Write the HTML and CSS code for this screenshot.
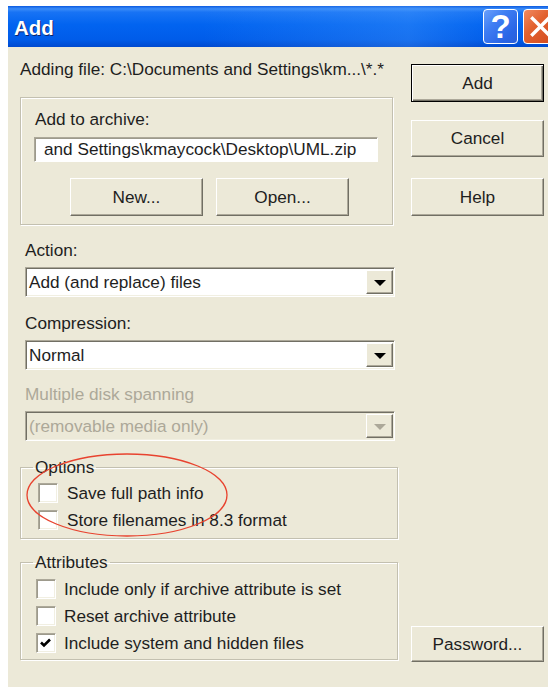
FILE: index.html
```html
<!DOCTYPE html>
<html lang="en">
<head>
<meta charset="utf-8">
<title>Add</title>
<link rel="stylesheet" href="styles.css">
</head>
<body>
<div class="window">
  <div class="titlebar">
    <span class="title">Add</span>
    <div class="caption-buttons">
      <span class="cap-btn cap-help">?</span>
      <span class="cap-btn cap-close">
        <svg width="35" height="35" viewBox="0 0 35 35"><path d="M9 9 L26 26 M26 9 L9 26" stroke="#fff" stroke-width="3.6" stroke-linecap="square" fill="none"/></svg>
      </span>
    </div>
  </div>

  <div class="client">
    <div class="col-main">
      <div class="line adding">Adding file: C:\Documents and Settings\km...\*.*</div>

      <div class="group archive">
        <div class="line">Add to archive:</div>
        <div class="textbox">and Settings\kmaycock\Desktop\UML.zip</div>
        <div class="btn-row">
          <button class="btn">New...</button>
          <button class="btn">Open...</button>
        </div>
      </div>

      <div class="line field-label first">Action:</div>
      <div class="combo">
        <span class="combo-text">Add (and replace) files</span>
        <span class="combo-btn"><span class="arrow"></span></span>
      </div>

      <div class="line field-label">Compression:</div>
      <div class="combo">
        <span class="combo-text">Normal</span>
        <span class="combo-btn"><span class="arrow"></span></span>
      </div>

      <div class="line field-label disabled spanning">Multiple disk spanning</div>
      <div class="combo is-disabled">
        <span class="combo-text">(removable media only)</span>
        <span class="combo-btn"><span class="arrow"></span></span>
      </div>

      <fieldset class="groupbox options">
        <legend>Options</legend>
        <label class="check-row"><span class="check"></span><span>Save full path info</span></label>
        <label class="check-row"><span class="check"></span><span>Store filenames in 8.3 format</span></label>
      </fieldset>

      <fieldset class="groupbox attributes">
        <legend>Attributes</legend>
        <label class="check-row"><span class="check"></span><span>Include only if archive attribute is set</span></label>
        <label class="check-row"><span class="check"></span><span>Reset archive attribute</span></label>
        <label class="check-row"><span class="check checked"><svg width="18" height="18" viewBox="0 0 18 18"><path d="M4 8.5 L7 11.5 L13 5.5" stroke="#000" stroke-width="2.6" fill="none"/></svg></span><span>Include system and hidden files</span></label>
      </fieldset>
    </div>

    <div class="col-buttons">
      <button class="btn default">Add</button>
      <button class="btn cancel">Cancel</button>
      <button class="btn help">Help</button>
      <button class="btn password">Password...</button>
    </div>

    <svg class="markup" width="548" height="640" viewBox="0 0 548 640">
      <ellipse cx="119" cy="448" rx="100" ry="41" fill="none" stroke="#e8432f" stroke-width="1.3"/>
    </svg>
  </div>
</div>
</body>
</html>
```

FILE: styles.css
```css
html, body {
  margin: 0;
  padding: 0;
  background: #fff;
  overflow: hidden;
}

body {
  font-family: "Liberation Sans", Arial, sans-serif;
  font-size: 17.2px;
  color: #1e1e1e;
}

.window {
  margin: 6px 0 0 8px;
  width: 556px;
}

/* ---- caption bar ---- */
.titlebar {
  height: 41px;
  display: flex;
  align-items: flex-start;
  background:
    linear-gradient(to right, rgba(90, 170, 255, 0) 35%, rgba(90, 170, 255, 0.28) 72%, rgba(90, 170, 255, 0) 88%),
    linear-gradient(to bottom, #0b5ae0 0%, #3b8cf8 7%, #1873f4 15%, #0264f0 45%, #005ce9 82%, #0049cf 100%);
}

.title {
  flex: 1;
  box-sizing: border-box;
  height: 41px;
  padding: 3px 0 0 6px;
  line-height: 38px;
  font-weight: bold;
  font-size: 20.5px;
  color: #fff;
  text-shadow: 1px 1px 0 #0a246a;
}

.caption-buttons {
  display: flex;
  gap: 5px;
  margin: 3px 6px 0 0;
}

.cap-btn {
  box-sizing: border-box;
  width: 35px;
  height: 35px;
  border: 1px solid #fff;
  border-radius: 4px;
  display: flex;
  align-items: center;
  justify-content: center;
}

.cap-help {
  background: linear-gradient(to bottom right, #6aa0fb 0%, #3f7ef3 35%, #2a66e6 75%, #2b5fd8 100%);
  color: #fff;
  font-weight: bold;
  font-size: 33px;
  line-height: 33px;
}

.cap-close {
  background: linear-gradient(to bottom right, #f08a62 0%, #e2612f 40%, #d2491c 100%);
}

/* ---- dialog client area ---- */
.client {
  position: relative;
  height: 640px;
  box-sizing: border-box;
  background: #ece9d8;
  display: flex;
  align-items: flex-start;
  padding: 12px 0 0 12px;
}

.col-main {
  width: 378px;
}

.line {
  line-height: 20px;
  height: 20px;
  white-space: nowrap;
}

.disabled {
  color: #aca899;
}

/* etched group frame */
.group {
  box-sizing: border-box;
  border: 1px solid #c3c0b0;
  box-shadow: inset 1px 1px 0 #fff, 1px 1px 0 #fff;
}

.archive {
  width: 373px;
  margin-top: 18px;
  padding: 11px 0 8px 14px;
}

.textbox {
  box-sizing: border-box;
  width: 344px;
  height: 25px;
  margin: 8px 0 0 -1px;
  padding-left: 9px;
  line-height: 22px;
  background: #fff;
  border: 1px solid;
  border-color: #aca899 #fff #fff #aca899;
  box-shadow: inset 1px 1px 0 #9d9a8c;
  white-space: nowrap;
  overflow: hidden;
}

.btn-row {
  display: flex;
  gap: 13px;
  margin: 16px 0 0 35px;
}

.btn {
  box-sizing: border-box;
  width: 133px;
  height: 38px;
  padding: 0;
  background: #ece9d8;
  border: 1px solid;
  border-color: #fff #716f64 #716f64 #fff;
  box-shadow: inset -1px -1px 0 #aca899;
  font: inherit;
  color: inherit;
}

.field-label {
  margin-top: 16px;
  padding-left: 5px;
}

.field-label.first {
  margin-top: 15px;
}

.field-label.spanning {
  margin-top: 14px;
}

/* drop-down list */
.combo {
  box-sizing: border-box;
  display: flex;
  width: 370px;
  height: 30px;
  margin: 7px 0 0 5px;
  padding: 2px 1px 2px 2px;
  background: #fff;
  border: 1px solid;
  border-color: #aca899 #fff #fff #aca899;
  box-shadow: inset 1px 1px 0 #716f64, inset -1px -1px 0 #f1efe2;
}

.combo-text {
  flex: 1;
  padding-left: 1px;
  line-height: 24px;
  white-space: nowrap;
}

.combo-btn {
  box-sizing: border-box;
  width: 27px;
  background: #ece9d8;
  border: 1px solid;
  border-color: #fff #716f64 #716f64 #fff;
  box-shadow: inset -1px -1px 0 #aca899;
  display: flex;
  align-items: center;
  justify-content: center;
}

.arrow {
  width: 0;
  height: 0;
  border-left: 6px solid transparent;
  border-right: 6px solid transparent;
  border-top: 6px solid #000;
  margin-top: 1px;
}

.combo.is-disabled {
  background: #ece9d8;
  color: #aca899;
}

.combo.is-disabled .arrow {
  border-top-color: #aca899;
}

/* option frames with captions */
.groupbox {
  box-sizing: border-box;
  width: 378px;
  min-width: 0;
  margin: 16px 0 0 0;
  padding: 6px 0 8px 12px;
  border: 1px solid #c3c0b0;
  box-shadow: inset 1px 1px 0 #fff, 1px 1px 0 #fff;
}

.groupbox legend {
  padding: 0 2px 0 2px;
  line-height: 20px;
}

.attributes {
  margin-top: 13px;
  padding-top: 7px;
  padding-bottom: 6px;
}

.check-row {
  display: flex;
  align-items: center;
  height: 20px;
  white-space: nowrap;
}

.check-row + .check-row {
  margin-top: 7px;
}

.options .check-row {
  margin-left: 5px;
  gap: 9px;
}

.attributes .check-row {
  margin-left: 3px;
  gap: 8px;
}

.check {
  box-sizing: border-box;
  flex: none;
  width: 20px;
  height: 20px;
  background: #fff;
  border: 1px solid;
  border-color: #aca899 #fff #fff #aca899;
  box-shadow: inset 1px 1px 0 #9d9a8c, inset -1px -1px 0 #f1efe2;
  display: flex;
  align-items: center;
  justify-content: center;
}

/* command buttons on the right */
.col-buttons {
  display: flex;
  flex-direction: column;
  margin-left: 13px;
  width: 133px;
}

.btn.default {
  height: 38px;
  margin-top: 5px;
  border: 1px solid #000;
  box-shadow: inset 1px 1px 0 #fff, inset -1px -1px 0 #716f64, inset -2px -2px 0 #aca899;
}

.btn.cancel {
  height: 37px;
  margin-top: 18px;
}

.btn.help {
  margin-top: 21px;
}

.btn.password {
  height: 36px;
  margin-top: 410px;
}

/* hand-drawn highlight ring */
.markup {
  position: absolute;
  left: 0;
  top: 0;
  pointer-events: none;
}
```
